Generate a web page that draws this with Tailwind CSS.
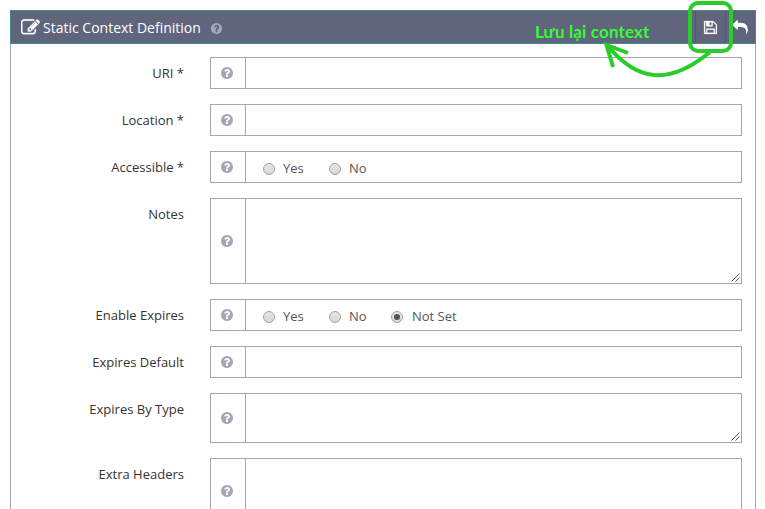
<!DOCTYPE html>
<html lang="en">
<head>
<meta charset="utf-8">
<title>Static Context Definition</title>
<script src="https://cdn.jsdelivr.net/npm/@tailwindcss/browser@4"></script>
</head>
<body class="relative h-[509px] w-[765px] overflow-hidden bg-white font-['Open_Sans',sans-serif] text-[13px] text-[#333]">
<svg class="hidden">
  <symbol id="help" viewBox="0 0 1792 1792"><path d="M1024 1376v-192q0-14-9-23t-23-9h-192q-14 0-23 9t-9 23v192q0 14 9 23t23 9h192q14 0 23-9t9-23zm256-672q0-88-55.5-163t-138.5-116-170-41q-243 0-371 213-15 24 8 42l132 100q7 6 19 6 16 0 25-12 53-68 86-92 34-24 86-24 48 0 85.5 26t37.5 59q0 38-20 61t-68 45q-63 28-115.5 86.5t-52.5 125.5v36q0 14 9 23t23 9h192q14 0 23-9t9-23q0-19 21.5-49.5t54.5-49.5q32-18 49-28.5t46-35 44.5-48 28-60.5 12.5-81zm384 192q0 209-103 385.5t-279.5 279.5-385.5 103-385.5-103-279.5-279.5-103-385.5 103-385.5 279.5-279.5 385.5-103 385.5 103 279.5 279.5 103 385.5z"/></symbol>
  <symbol id="grip" viewBox="0 0 9 9"><path d="M.5 8.5L8.5 .5M4.5 8.5L8.5 4.5" stroke="#555" stroke-width="1" fill="none"/></symbol>
</svg>
<div class="ml-[10px] w-[746px] pt-[10px]">
  <header class="flex h-[34px] items-center border border-[#4a8a80] bg-[#60647c] pl-[10px] text-white">
    <svg class="mt-px h-[19px] w-[19px]" viewBox="0 0 1792 1792" fill="currentColor" stroke="currentColor" stroke-width="30"><path d="M888 1184l116-116-152-152-116 116v56h96v96h56zm440-720q-16-16-33 1l-350 350q-17 17-1 33t33-1l350-350q17-17 1-33zm80 594v190q0 119-84.5 203.5t-203.5 84.5h-832q-119 0-203.5-84.5t-84.5-203.5v-832q0-119 84.5-203.5t203.5-84.5h832q63 0 117 25 15 7 18 23 3 17-9 29l-49 49q-14 14-32 8-23-6-45-6h-832q-66 0-113 47t-47 113v832q0 66 47 113t113 47h832q66 0 113-47t47-113v-126q0-13 9-22l64-64q15-15 35-7t20 29zm-96-738l288 288-672 672h-288v-288zm444 132l-92 92-288-288 92-92q28-28 68-28t68 28l152 152q28 28 28 68t-28 68z"/></svg>
    <h1 class="mt-[2px] ml-[3px] w-[167px] whitespace-nowrap text-[14px] leading-[20px]">Static Context Definition</h1>
    <svg class="mt-[2px] h-[13px] w-[13px] text-[#a5a8b5]" fill="currentColor"><use href="#help"/></svg>
    <div class="ml-auto flex h-full">
      <div class="flex w-[31px] items-center justify-center border-x border-[#54586d]">
        <svg class="h-[15px] w-[15px]" viewBox="0 0 1792 1792" fill="currentColor" stroke="currentColor" stroke-width="30"><path d="M512 1536h768v-384h-768v384zm896 0h128v-896q0-14-10-38.5t-20-34.5l-281-281q-10-10-34-20t-39-10v416q0 40-28 68t-68 28h-576q-40 0-68-28t-28-68v-416h-128v1280h128v-416q0-40 28-68t68-28h832q40 0 68 28t28 68v416zm-384-928v-320q0-13-9.5-22.5t-22.5-9.5h-192q-13 0-22.5 9.5t-9.5 22.5v320q0 13 9.5 22.5t22.5 9.5h192q13 0 22.5-9.5t9.5-22.5zm640 32v928q0 40-28 68t-68 28h-1344q-40 0-68-28t-28-68v-1344q0-40 28-68t68-28h928q40 0 88 20t76 48l280 280q28 28 48 76t20 88z"/></svg>
      </div>
      <div class="flex w-[29px] items-center justify-center pr-[1px]">
        <svg class="h-[15px] w-[15px]" viewBox="0 0 1792 1792" fill="currentColor"><path d="M1792 1120q0 166-127 451-3 7-10.5 24t-13.5 30-13 22q-12 17-28 17-15 0-23.5-10t-8.5-25q0-9 2.5-26.5t2.5-23.5q5-68 5-123 0-112-19.5-200.5t-54-153.5-89-112-115-78.5-145.5-48-165.5-24-191.5-7.5h-224v256q0 26-19 45t-45 19-45-19l-512-512q-19-19-19-45t19-45l512-512q19-19 45-19t45 19 19 45v256h224q713 0 875 403 53 134 53 333z"/></svg>
      </div>
    </div>
  </header>
  <main class="flex h-[480px] flex-col gap-[15px] border-x border-[#a5a6b3] pt-[13px] pr-[13px]">
    <div class="flex h-[32px] shrink-0"><div class="mr-[26px] w-[173px] pt-[6px] text-right leading-[20px]">URI *</div><div class="flex flex-1 border border-[#a5a6b3]"><div class="flex w-[35px] items-center justify-center border-r border-[#a5a6b3] pr-[2px] text-[#a5a6b3]"><svg class="h-[14px] w-[14px]" fill="currentColor"><use href="#help"/></svg></div></div></div>
    <div class="flex h-[32px] shrink-0"><div class="mr-[26px] w-[173px] pt-[6px] text-right leading-[20px]">Location *</div><div class="flex flex-1 border border-[#a5a6b3]"><div class="flex w-[35px] items-center justify-center border-r border-[#a5a6b3] pr-[2px] text-[#a5a6b3]"><svg class="h-[14px] w-[14px]" fill="currentColor"><use href="#help"/></svg></div></div></div>
    <div class="flex h-[32px] shrink-0"><div class="mr-[26px] w-[173px] pt-[6px] text-right leading-[20px]">Accessible *</div><div class="flex flex-1 border border-[#a5a6b3]"><div class="flex w-[35px] items-center justify-center border-r border-[#a5a6b3] pr-[2px] text-[#a5a6b3]"><svg class="h-[14px] w-[14px]" fill="currentColor"><use href="#help"/></svg></div>
      <div class="flex items-center pt-[3px] pl-[17px] text-[#555]">
        <label class="flex w-[66px] items-center gap-[8px]"><span class="h-[12px] w-[12px] rounded-full border border-[#a3a3a3] bg-linear-to-b from-[#e6e6e6] to-[#d8d8d8]"></span>Yes</label>
        <label class="flex w-[62px] items-center gap-[8px]"><span class="h-[12px] w-[12px] rounded-full border border-[#a3a3a3] bg-linear-to-b from-[#e6e6e6] to-[#d8d8d8]"></span>No</label>
      </div></div></div>
    <div class="flex h-[86px] shrink-0"><div class="mr-[26px] w-[173px] pt-[6px] text-right leading-[20px]">Notes</div><div class="flex flex-1 border border-[#a5a6b3]"><div class="flex w-[35px] items-center justify-center border-r border-[#a5a6b3] pr-[2px] text-[#a5a6b3]"><svg class="h-[14px] w-[14px]" fill="currentColor"><use href="#help"/></svg></div><svg class="mr-[1px] mb-[1px] ml-auto h-[9px] w-[9px] self-end"><use href="#grip"/></svg></div></div>
    <div class="flex h-[32px] shrink-0"><div class="mr-[26px] w-[173px] pt-[6px] text-right leading-[20px]">Enable Expires</div><div class="flex flex-1 border border-[#a5a6b3]"><div class="flex w-[35px] items-center justify-center border-r border-[#a5a6b3] pr-[2px] text-[#a5a6b3]"><svg class="h-[14px] w-[14px]" fill="currentColor"><use href="#help"/></svg></div>
      <div class="flex items-center pt-[3px] pl-[17px] text-[#555]">
        <label class="flex w-[66px] items-center gap-[8px]"><span class="h-[12px] w-[12px] rounded-full border border-[#a3a3a3] bg-linear-to-b from-[#e6e6e6] to-[#d8d8d8]"></span>Yes</label>
        <label class="flex w-[62px] items-center gap-[8px]"><span class="h-[12px] w-[12px] rounded-full border border-[#a3a3a3] bg-linear-to-b from-[#e6e6e6] to-[#d8d8d8]"></span>No</label>
        <label class="flex items-center gap-[9px] whitespace-nowrap"><span class="flex h-[12px] w-[12px] items-center justify-center rounded-full border border-[#a3a3a3] bg-linear-to-b from-[#e6e6e6] to-[#d8d8d8]"><span class="h-[6px] w-[6px] rounded-full bg-[#555]"></span></span>Not Set</label>
      </div></div></div>
    <div class="flex h-[32px] shrink-0"><div class="mr-[26px] w-[173px] pt-[6px] text-right leading-[20px]">Expires Default</div><div class="flex flex-1 border border-[#a5a6b3]"><div class="flex w-[35px] items-center justify-center border-r border-[#a5a6b3] pr-[2px] text-[#a5a6b3]"><svg class="h-[14px] w-[14px]" fill="currentColor"><use href="#help"/></svg></div></div></div>
    <div class="flex h-[50px] shrink-0"><div class="mr-[26px] w-[173px] pt-[6px] text-right leading-[20px]">Expires By Type</div><div class="flex flex-1 border border-[#a5a6b3]"><div class="flex w-[35px] items-center justify-center border-r border-[#a5a6b3] pr-[2px] text-[#a5a6b3]"><svg class="h-[14px] w-[14px]" fill="currentColor"><use href="#help"/></svg></div><svg class="mr-[1px] mb-[1px] ml-auto h-[9px] w-[9px] self-end"><use href="#grip"/></svg></div></div>
    <div class="flex h-[66px] shrink-0"><div class="mr-[26px] w-[173px] pt-[6px] text-right leading-[20px]">Extra Headers</div><div class="flex flex-1 border border-[#a5a6b3]"><div class="flex w-[35px] items-center justify-center border-r border-[#a5a6b3] pr-[2px] text-[#a5a6b3]"><svg class="h-[14px] w-[14px]" fill="currentColor"><use href="#help"/></svg></div></div></div>
  </main>
</div>
<div class="absolute top-[21px] left-[535px] font-['Lato',sans-serif] text-[17px] leading-[22px] font-bold tracking-[0.15px] whitespace-nowrap text-[#33ff33]">Lưu lại context</div>
<svg class="absolute top-0 left-0 h-[100px] w-[765px]" viewBox="0 0 765 100" fill="none" stroke="#29cc29">
  <rect x="690" y="3" width="41" height="48" rx="8" stroke-width="4"/>
  <path d="M710 52C670 85 638 83 607 45" stroke-width="4"/>
  <path d="M613 67L606.500 45L628 53" stroke-width="4"/>
</svg>
</body>
</html>
